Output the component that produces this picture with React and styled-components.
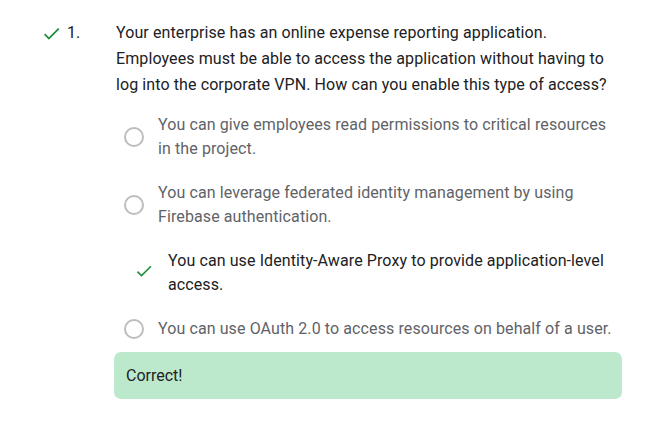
import React from "react"
import styled, { createGlobalStyle } from "styled-components"

const GlobalStyle = createGlobalStyle`
  body {
    margin: 0;
    background: #ffffff;
    font-family: Roboto, "Liberation Sans", sans-serif;
    color: #202124;
  }
`

const Page = styled.div`
  padding: 20px 25px 0 41px;
`

const Question = styled.div`
  display: grid;
  grid-template-columns: 26px 49px 507px;
  align-items: start;
`

const Mark = styled.div`
  height: 26px;
  display: flex;
  align-items: center;
  color: #1e8e3e;
`

const Number = styled.div`
  font-size: 16px;
  line-height: 26px;
`

const Prompt = styled.div`
  font-size: 16px;
  line-height: 26px;
  letter-spacing: 0.1px;
`

const Options = styled.div`
  display: flex;
  flex-direction: column;
  gap: 20px;
  margin-top: 15px;
`

const Option = styled.label`
  display: flex;
  align-items: center;
  gap: 14px;
  padding-left: ${p => (p.$picked ? "18px" : "8px")};
  font-size: 16px;
  line-height: 24px;
  letter-spacing: 0.1px;
  color: ${p => (p.$picked ? "#202124" : "#5f6368")};
`

const Radio = styled.span`
  flex: none;
  width: 16px;
  height: 16px;
  border: 2px solid #bdbdbd;
  border-radius: 50%;
`

const Tick = styled.span`
  flex: none;
  display: flex;
  color: #1e8e3e;
  margin-top: -4px;
`

const OptionText = styled.span`
  width: 455px;
`

const Feedback = styled.div`
  margin: 11px 0 0 -2px;
  width: 508px;
  box-sizing: border-box;
  height: 47px;
  display: flex;
  align-items: center;
  padding: 0 12px;
  background: #bce9cc;
  border-radius: 7px;
  font-size: 16px;
  color: #202124;
`

const Check = ({ size }) => (
  <svg width={size} height={size} viewBox="0 0 24 24" fill="currentColor">
    <path d="M9 16.17L4.83 12l-1.42 1.41L9 19 21 7l-1.41-1.41z" />
  </svg>
)

const options = [
  "You can give employees read permissions to critical resources in the project.",
  "You can leverage federated identity management by using Firebase authentication.",
  "You can use Identity-Aware Proxy to provide application-level access.",
  "You can use OAuth 2.0 to access resources on behalf of a user.",
]

const App = () => {
  return (
    <Page>
      <GlobalStyle />
      <Question>
        <Mark>
          <Check size={21} />
        </Mark>
        <Number>1.</Number>
        <div>
          <Prompt>
            Your enterprise has an online expense reporting application.
            Employees must be able to access the application without having to
            log into the corporate VPN. How can you enable this type of access?
          </Prompt>
          <Options>
            {options.map((text, i) => (
              <Option key={i} $picked={i === 2}>
                {i === 2 ? (
                  <Tick>
                    <Check size={20} />
                  </Tick>
                ) : (
                  <Radio />
                )}
                <OptionText>{text}</OptionText>
              </Option>
            ))}
          </Options>
          <Feedback>Correct!</Feedback>
        </div>
      </Question>
    </Page>
  )
}

export default App
